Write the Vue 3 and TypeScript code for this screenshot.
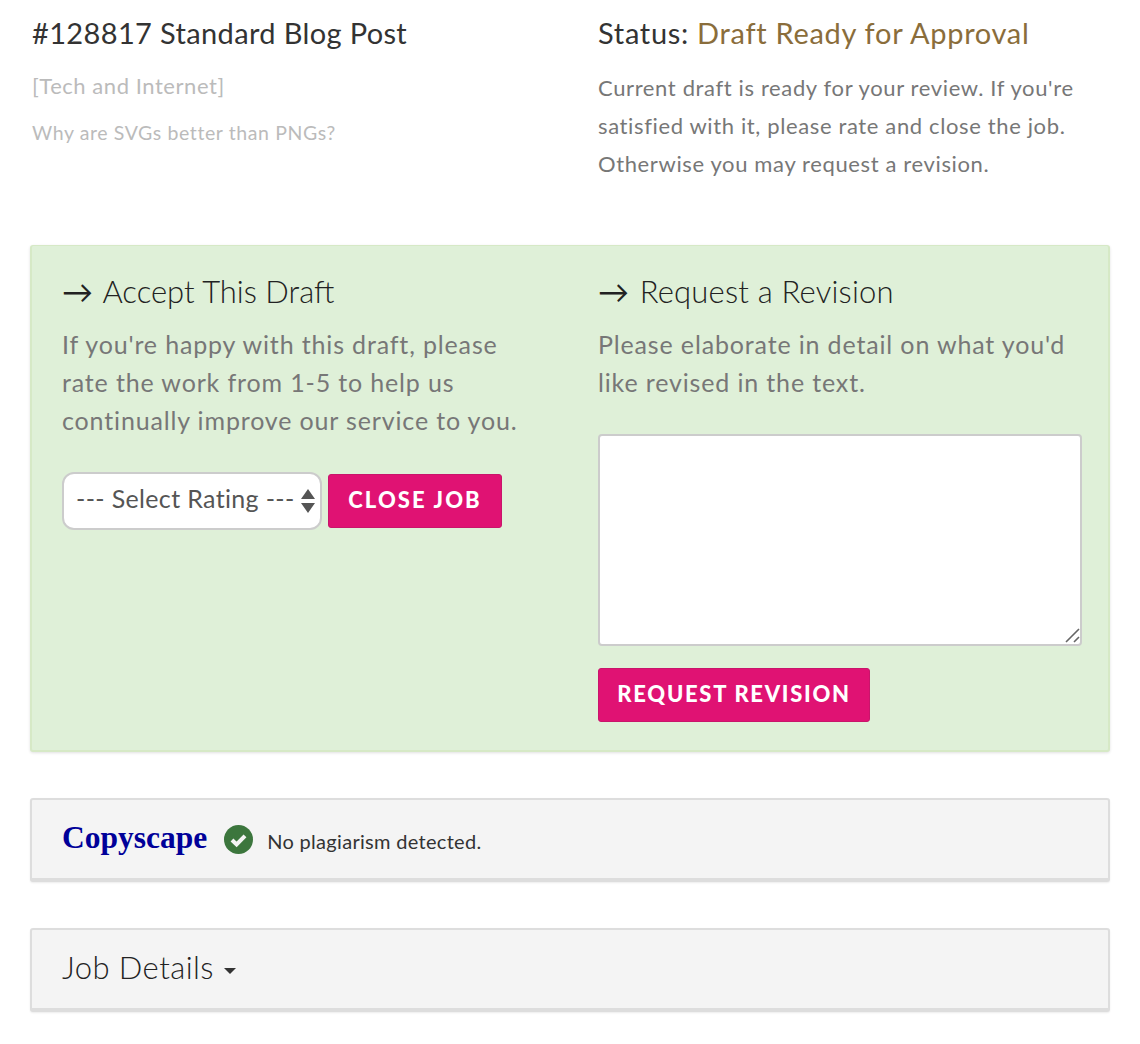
<script setup lang="ts">
const ratingLabel: string = "--- Select Rating ---";
</script>

<template>
  <div class="page">
    <header class="top">
      <div class="top-left">
        <h1 class="title job">#128817 Standard Blog Post</h1>
        <p class="category">[Tech and Internet]</p>
        <p class="topic">Why are SVGs better than PNGs?</p>
      </div>
      <div class="top-right">
        <h2 class="title stat">Status: <span class="status">Draft Ready for Approval</span></h2>
        <p class="note">Current draft is ready for your review. If you're satisfied with it, please rate and close the job. Otherwise you may request a revision.</p>
      </div>
    </header>

    <section class="panel green">
      <div class="col">
        <h3 class="head"><span class="arrow">→</span> Accept This Draft</h3>
        <p class="copy">If you're happy with this draft, please rate the work from 1-5 to help us continually improve our service to you.</p>
        <div class="rate">
          <div class="select-wrap">
            <select class="select">
              <option>{{ ratingLabel }}</option>
            </select>
            <svg class="updown" width="14" height="24" viewBox="0 0 14 24">
              <path d="M7 0 L14 10 L0 10 Z M0 14 L14 14 L7 24 Z" fill="#555" />
            </svg>
          </div>
          <button class="btn close">CLOSE JOB</button>
        </div>
      </div>
      <div class="col">
        <h3 class="head req"><span class="arrow">→</span> Request a Revision</h3>
        <p class="copy">Please elaborate in detail on what you'd like revised in the text.</p>
        <div class="area-wrap">
          <textarea class="area"></textarea>
          <svg class="grip" width="15" height="15" viewBox="0 0 15 15">
            <path d="M1 14 L14 1 M9 14 L14 9" stroke="#666" stroke-width="1.6" fill="none" />
          </svg>
        </div>
        <button class="btn revise">REQUEST REVISION</button>
      </div>
    </section>

    <section class="panel grey copyscape">
      <span class="logo">Copyscape</span>
      <svg class="tick" width="29" height="29" viewBox="0 0 29 29">
        <circle cx="14.5" cy="14.5" r="14.5" fill="#3c763d" />
        <path d="M8 15 L12.6 19.5 L21 10.8" fill="none" stroke="#f4f4f4" stroke-width="4" />
      </svg>
      <span class="ok">No plagiarism detected.</span>
    </section>

    <section class="panel grey details">
      <span class="details-text">Job Details</span>
      <svg class="caret" width="12" height="6" viewBox="0 0 12 6"><path d="M0 0 H12 L6 6 Z" fill="#333" /></svg>
    </section>
  </div>
</template>

<style>
body { background: #fff; }
</style>

<style scoped>
.page {
  width: 1080px;
  height: 1044px;
  box-sizing: border-box;
  margin-left: 30px;
  padding-top: 13px;
  font-family: Lato, "Open Sans", sans-serif;
  color: #333;
}
.top {
  display: grid;
  grid-template-columns: 568px 1fr;
  height: 232px;
}
.top-left { padding-left: 2px; }
.title {
  margin: 0;
  font-size: 29px;
  line-height: 40px;
  font-weight: 400;
  color: #333;
}
.job { letter-spacing: 0.36px; }
.stat { letter-spacing: 0.7px; }
.status { color: #8a6d3b; }
.category {
  margin: 20px 0 0;
  font-size: 22px;
  line-height: 26px;
  letter-spacing: 0.55px;
  color: #bbb;
}
.topic {
  margin: 21px 0 0;
  font-size: 19.5px;
  line-height: 26px;
  letter-spacing: 0.6px;
  color: #bbb;
}
.note {
  margin: 16px 0 0;
  width: 482px;
  font-size: 22px;
  line-height: 38px;
  letter-spacing: 0.63px;
  color: #777;
}
.panel {
  box-sizing: border-box;
  border-radius: 3px;
}
.green {
  display: grid;
  grid-template-columns: 484px 484px;
  column-gap: 52px;
  height: 507px;
  padding: 24px 0 0 30px;
  background: #dff0d8;
  border: 2px solid #d6e9c6;
  border-width: 1px 2px 2px;
  box-shadow: 0 1px 3px rgba(0, 0, 0, 0.12);
}
.head {
  margin: 0;
  font-size: 31px;
  line-height: 42px;
  font-weight: 300;
  color: #222;
}
.req { letter-spacing: 0.2px; }
.arrow { font-weight: 400; margin-right: 2px; letter-spacing: 0; }
.copy {
  margin: 13px 0 0;
  width: 476px;
  font-size: 25px;
  line-height: 38px;
  letter-spacing: 0.85px;
  color: #777;
}
.rate {
  display: flex;
  align-items: center;
  gap: 6px;
  margin-top: 33px;
}
.select-wrap { position: relative; width: 260px; height: 58px; }
.select {
  appearance: none;
  width: 100%;
  height: 100%;
  box-sizing: border-box;
  padding: 0 0 6px 12px;
  border: 2px solid #ccc;
  border-radius: 12px;
  background: #fff;
  font: 400 25px Lato, sans-serif;
  letter-spacing: 0.35px;
  color: #555;
}
.updown { position: absolute; right: 7px; top: 17px; }
.btn {
  box-sizing: border-box;
  border: 1px solid #c9156b;
  border-radius: 3px;
  background: #e01273;
  color: #fff;
  font: 900 22px Lato, sans-serif;
  padding: 0 0 4px;
}
.close { width: 174px; height: 54px; letter-spacing: 2.1px; }
.revise { display: block; width: 272px; height: 54px; margin-top: 22px; letter-spacing: 1.7px; }
.area-wrap { position: relative; margin-top: 33px; width: 484px; height: 212px; }
.area {
  display: block;
  box-sizing: border-box;
  width: 100%;
  height: 100%;
  border: 2px solid #ccc;
  border-radius: 4px;
  background: #fff;
  resize: none;
}
.grip { position: absolute; right: 2px; bottom: 3px; }
.grey {
  background: #f4f4f4;
  border: 2px solid #ddd;
  border-bottom-width: 4px;
  box-shadow: 0 1px 2px rgba(0, 0, 0, 0.08);
}
.copyscape {
  display: flex;
  align-items: center;
  height: 84px;
  margin-top: 46px;
  padding-left: 30px;
}
.logo {
  margin-top: -2px;
  font-family: "Liberation Serif", serif;
  font-weight: 700;
  font-size: 31.5px;
  color: #000099;
}
.tick { margin-left: 17px; }
.ok { margin: 3px 0 0 14px; font-size: 20px; letter-spacing: 0.3px; color: #333; }
.details {
  display: flex;
  align-items: center;
  height: 84px;
  margin-top: 46px;
  padding-left: 30px;
}
.details-text { margin-top: -4px; font-size: 31px; font-weight: 300; letter-spacing: 0.45px; color: #222; }
.caret { margin-left: 10px; margin-top: 4px; }
</style>
